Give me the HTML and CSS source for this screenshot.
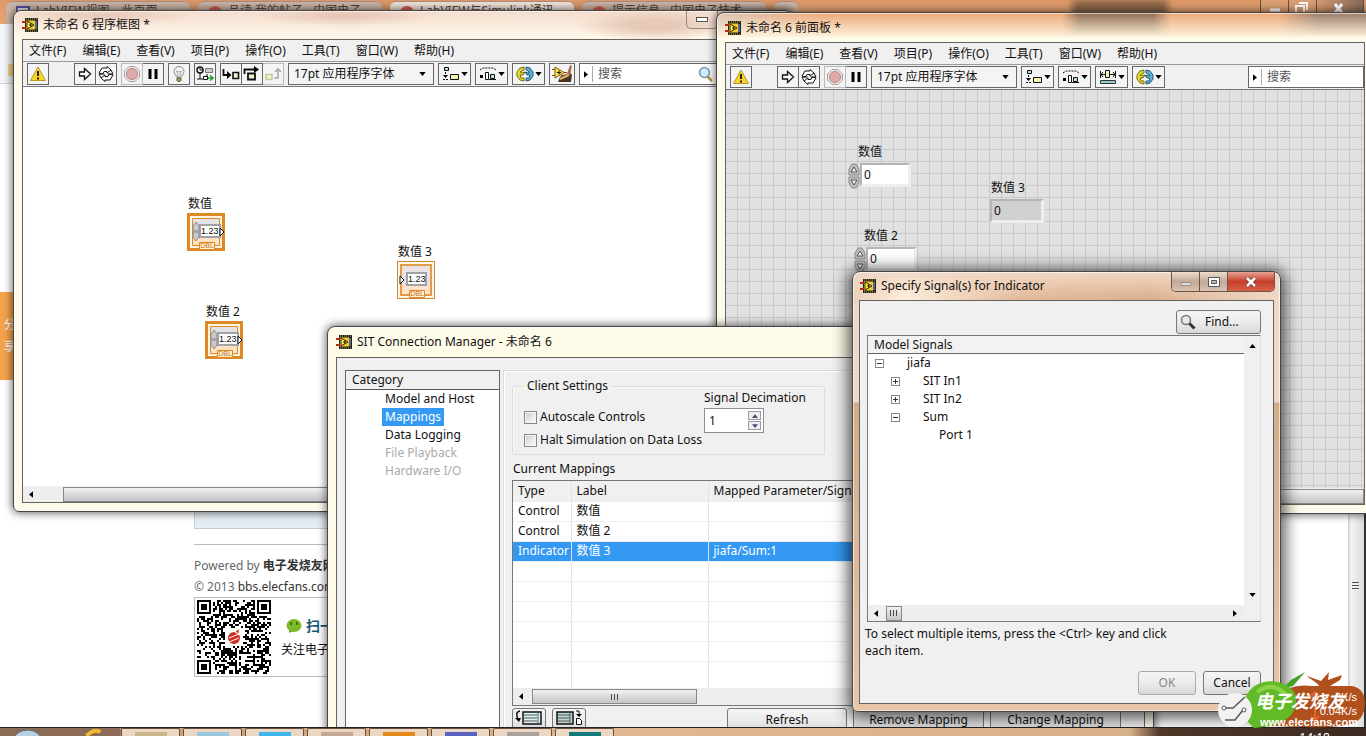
FILE: index.html
```html
<!DOCTYPE html>
<html lang="zh-CN">
<head>
<meta charset="utf-8">
<meta name="viewport" content="width=device-width, initial-scale=1">
<title>LabVIEW SIT Connection Manager</title>
<link rel="stylesheet" href="styles.css">
</head>
<body>
<svg class="defs" aria-hidden="true">
  <defs>
    <symbol id="i-app" viewBox="0 0 16 14"><path d="M3 0h13v14H3z" fill="#24221c"/><path d="M4 1h11M4 13h11" stroke="#b8a84c" stroke-dasharray="1 1"/><path d="M4 2.500h9v9H4z" fill="#f0cc30"/><path d="M13 3h2v8h-2z" fill="#536b93"/><path d="M0 4h4M0 10h4" stroke="#b82a18" stroke-width="2"/><path d="M5 3l7 4-7 4z" fill="#ffed4a" stroke="#302800"/><path d="M7 7h3M8.500 5.500v3" stroke="#302800"/></symbol>
    <symbol id="i-warn" viewBox="0 0 16 16"><path d="M8 1l7.500 13.500H.5z" fill="#f9d52c" stroke="#b99722"/><path d="M8 5v5M8 11.500v2" stroke="#222" stroke-width="2"/></symbol>
    <symbol id="i-run" viewBox="0 0 16 16"><path d="M2.500 6h5V2.500L13.500 8l-6 5.500V10h-5z" fill="#fff" stroke="#111" stroke-width="1.300"/></symbol>
    <symbol id="i-cont" viewBox="0 0 16 16"><path d="M1 7l3-5h5V.5L13 4 9 7V5.500H6L4.500 8z" fill="#fff" stroke="#111"/><path d="M15 9l-3 5H7v1.500L3 12l4-3v1.500h3L11.500 8z" fill="#fff" stroke="#111"/><path d="M9.500 8h5.500l-2-4M6.500 8H1l2 4" fill="none" stroke="#111"/></symbol>
    <symbol id="i-abort" viewBox="0 0 16 16"><path d="M5 .5h6L15.500 5v6L11 15.500H5L.5 11V5z" fill="#ece6e6" stroke="#aaa0a0"/><circle cx="8" cy="8" r="5.500" fill="#dfa9a9" stroke="#b18a8a"/></symbol>
    <symbol id="i-pause" viewBox="0 0 16 16"><path d="M3.500 3h3v10h-3zM9.500 3h3v10h-3z" fill="#000"/></symbol>
    <symbol id="i-bulb" viewBox="0 0 16 16"><path d="M5.500 11C5 8.500 3 8 3 5.500a5 5 0 0 1 10 0C13 8 11 8.500 10.500 11z" fill="#f4f4f4" stroke="#888"/><path d="M6 5l1 5M10 5l-1 5M5 5l3 1 3-1" stroke="#aaa" fill="none"/><path d="M6 12h4v2.500l-1 1H7l-1-1z" fill="#b79c4e" stroke="#555"/></symbol>
    <symbol id="i-retain" viewBox="0 0 18 16"><circle cx="4" cy="4" r="3" fill="#fff" stroke="#111" stroke-width="1.500"/><path d="M4 2v2h2M4 7v6M1 13h6M11 8v4" stroke="#111" fill="none"/><path d="M9.500 2.500h7v4h-7z" fill="#ccc" stroke="#777"/><path d="M7.500 10.500h4v3h-4z" fill="#fff" stroke="#111"/><path d="M12 12h5M14 9.500l3 2.500-3 2.500" stroke="#17a529" stroke-width="1.500" fill="none"/></symbol>
    <symbol id="i-into" viewBox="0 0 18 16"><path d="M1.500 3v6H6" stroke="#111" stroke-width="1.800" fill="none"/><path d="M5 5l4.500 4L5 13z"/><path d="M11 6.500h5.500v6H11z" fill="#f3f3d0" stroke="#111" stroke-width="1.600"/></symbol>
    <symbol id="i-over" viewBox="0 0 18 16"><path d="M1.500 8V3.500H12" stroke="#111" stroke-width="1.800" fill="none"/><path d="M11 0l5 3.500L11 7z"/><path d="M5 7.500h7v6H5z" fill="#f3f3d0" stroke="#111" stroke-width="1.800"/></symbol>
    <symbol id="i-out" viewBox="0 0 18 16"><path d="M2 8.500h6v5H2z" fill="#f3f3cc" stroke="#c6c69c" stroke-width="1.500"/><path d="M10 12h4V4M11 6l3-3 3 3" stroke="#aaa" stroke-width="1.700" fill="none"/></symbol>
    <symbol id="i-align" viewBox="0 0 18 16"><path d="M2.500 1.500h4v3h-4z" fill="#b6e0dd" stroke="#111"/><path d="M3.500 6v3M1 13.500h6" stroke="#111" stroke-dasharray="2 1"/><path d="M1 9h5l-2.500 3z"/><path d="M8.500 8.500h8v5h-8z" fill="#f5efab" stroke="#111"/></symbol>
    <symbol id="i-dist" viewBox="0 0 18 16"><path d="M1 4l3-2h10l3 2" stroke="#111" stroke-dasharray="2 1" fill="none"/><path d="M1 9h3v3H1z"/><path d="M6.500 6.500h3v7h-3z" fill="#fff" stroke="#111"/><path d="M11.500 8.500h4v4h-4z" fill="#b6e0dd" stroke="#111"/><path d="M10 13.500h7" stroke="#111"/></symbol>
    <symbol id="i-size" viewBox="0 0 18 16"><path d="M1 5.500h16M1.500 2v7M16.500 2v7M4 3L2 5.500 4 8M14 3l2 2.500L14 8" stroke="#111" fill="none"/><path d="M6.500 1.500h4v7h-4z" fill="#f5efab" stroke="#111"/><path d="M1.500 11.500h15v3h-15z" fill="#8ed0cf" stroke="#333"/></symbol>
    <symbol id="i-order" viewBox="0 0 18 16"><path d="M8 1L4 2 1 6v4l3 4 4 1v-3H5L4 9h3l2-3-3 1-2-1 4-2z" fill="#eadc28" stroke="#746a10"/><path d="M10 1l4 1 3 4v4l-3 4-4 1v-3h3l1-3h-3L9 6l3 1 2-1-4-2z" fill="#5ab3d6" stroke="#205b77"/></symbol>
    <symbol id="i-clean" viewBox="0 0 22 18"><path d="M20 1l-3 8-7 1-2 6 11 1z" fill="#7d5430"/><path d="M9 12l12-3-1 8H7z" fill="#4c3420"/><path d="M19 0l2 1-2 8h-3z" fill="#9b754b"/><path d="M1 4.500h3M1 10.500h3M12 7.500h4" stroke="#b22"/><path d="M4 2l9 5.500L4 13z" fill="#ffe743" stroke="#6f6210"/><path d="M6 7.500h4M8 5.500v4" stroke="#111"/><path d="M9 14l9-4" stroke="#ddb76a" stroke-width="2"/></symbol>
    <symbol id="i-search" viewBox="0 0 16 16"><path d="M9 9l5.500 5.500" stroke="#333" stroke-width="3"/><circle cx="6" cy="6" r="4.500" fill="#dfeaf1" stroke="#777" stroke-width="1.500"/></symbol>
    <symbol id="i-lens" viewBox="0 0 16 16"><path d="M9 10l5 5" stroke="#bf934c" stroke-width="2.500"/><circle cx="6.500" cy="6.500" r="5" fill="#c9edff" stroke="#8296aa" stroke-width="1.500"/></symbol>
    <symbol id="i-down" viewBox="0 0 8 5"><path d="M0 0h8L4 5z"/></symbol>
    <symbol id="i-left" viewBox="0 0 5 8"><path d="M5 0v8L0 4z"/></symbol>
    <symbol id="i-right" viewBox="0 0 5 8"><path d="M0 0v8l5-4z"/></symbol>
    <symbol id="i-up" viewBox="0 0 8 5"><path d="M0 5h8L4 0z"/></symbol>
    <symbol id="i-knob" viewBox="0 0 12 26"><path d="M1 12V6l3-5h4l3 5v6zM1 14v6l3 5h4l3-5v-6z" fill="#bdbdbd" stroke="#8a8a8a"/><path d="M3 9l3-5 3 5zM3 17h6l-3 5z" fill="#eee" stroke="#555"/></symbol>
    <symbol id="i-ctl" viewBox="0 0 38 38"><path d="M1.500 1.500h35v35h-35z" fill="#fff2de" stroke="#dc8a25" stroke-width="3"/><path d="M5.500 5.500h27v27h-27z" fill="#e3e3e6" stroke="#dc8a25"/><path d="M6 24h26v8H6z" fill="#ffe2bf"/><path d="M12 11h22v14H12z" fill="#a1a1a8"/><path d="M14 13h18v10H14z" fill="#fff"/><path d="M6 18V13l3-4 3 4v5zM6 19v5l3 4 3-4v-5z" fill="#c9c9cc" stroke="#8b8b92"/><path d="M33 15v8l4-4z" fill="#fff" stroke="#111"/><path d="M12.500 29.500h15v7h-15z" fill="#fff0d8" stroke="#dc8a25"/></symbol>
    <symbol id="i-ind" viewBox="0 0 38 38"><path d="M.5.5h37v37H.5z" fill="#fff8e9" stroke="#cc8734"/><path d="M4 4h30v30H4z" fill="#e8e4e6" stroke="#e29b48" stroke-width="2"/><path d="M5 25h28v8H5z" fill="#ffe2c8"/><path d="M9 11h21v14H9z" fill="#a1a1a8"/><path d="M11 13h17v10H11z" fill="#fff"/><path d="M3 15v8l4-4z" fill="#fff" stroke="#111"/><path d="M12.500 29.500h15v7h-15z" fill="#fff0d8" stroke="#dc8a25"/></symbol>
  </defs>
</svg>

<main class="desktop">
  <section class="browser" aria-label="浏览器">
    <div class="tabs">
      <span class="tab"><i class="fav fav-purple"></i>LabVIEW视图，此页面</span>
      <span class="tab"><i class="fav"></i>品读 我的帖子 - 中国电子</span>
      <span class="tab tab-on"><i class="fav"></i>LabVIEW与Simulink通讯</span>
      <span class="tab"><i class="fav"></i>提示信息 - 中国电子技术</span>
      <span class="tab tab-new"></span>
      <span class="shade"></span>
      <span class="sys"><svg viewBox="0 0 104 14"><path d="M.5 0v14M28.500 0v14M56.500 0v14M103.500 0v14" stroke="#69503e"/><path d="M10 10h10" stroke="#fff" stroke-width="3"/><path d="M36 6h8v7h-8zM39 3h8v7" stroke="#fff" stroke-width="2" fill="none"/><path d="M75 4l7 9M82 4l-7 9" stroke="#fff" stroke-width="3"/></svg></span>
    </div>
    <div class="bar"></div>
    <div class="page">
      <a class="share" href="#share">分<br>享</a>
      <footer class="foot">
        <div class="strip"></div>
        <p class="credit first">Powered by <b>电子发烧友网</b></p>
        <p class="credit">© 2013 <span>bbs.elecfans.com</span></p>
        <div class="qrbox">
          <svg class="qr" id="qr" viewBox="0 0 37 37" role="img" aria-label="二维码"></svg>
          <div class="follow">
            <p class="scan"><svg viewBox="0 0 16 16" class="s16"><path d="M3 11l0 4 4-2z" fill="#70a51e"/><ellipse cx="8" cy="7.500" rx="7.500" ry="6.500" fill="#7db928"/><path d="M5 4v3M11 4v3" stroke="#33590a" stroke-width="1.500"/></svg>扫一扫</p>
            <p>关注电子发烧友</p>
          </div>
        </div>
      </footer>
      <div class="pagebar"><i></i></div>
    </div>
  </section>

  <section class="win diagram" aria-label="程序框图">
    <header class="title"><svg class="app"><use href="#i-app"/></svg><h2>未命名 6 程序框图 *</h2><button class="minbtn" aria-label="最小化"><i></i></button></header>
    <div class="client">
      <nav class="menu"><button>文件(F)</button><button>编辑(E)</button><button>查看(V)</button><button>项目(P)</button><button>操作(O)</button><button>工具(T)</button><button>窗口(W)</button><button>帮助(H)</button></nav>
      <div class="tools">
        <button class="tb warn" aria-label="警告"><svg><use href="#i-warn"/></svg></button>
        <div class="grp"><button class="tb" aria-label="运行"><svg><use href="#i-run"/></svg></button><button class="tb" aria-label="连续运行"><svg><use href="#i-cont"/></svg></button></div>
        <div class="grp"><button class="tb dim" aria-label="中止"><svg><use href="#i-abort"/></svg></button><button class="tb" aria-label="暂停"><svg><use href="#i-pause"/></svg></button></div>
        <button class="tb" aria-label="高亮执行"><svg><use href="#i-bulb"/></svg></button>
        <button class="tb" aria-label="保存连线值"><svg><use href="#i-retain"/></svg></button>
        <div class="grp"><button class="tb" aria-label="步入"><svg><use href="#i-into"/></svg></button><button class="tb" aria-label="步过"><svg><use href="#i-over"/></svg></button><button class="tb dim" aria-label="步出"><svg><use href="#i-out"/></svg></button></div>
        <div class="fontsel"><select aria-label="字体"><option>17pt 应用程序字体</option></select><svg><use href="#i-down"/></svg></div>
        <button class="tb wide" aria-label="对齐"><svg><use href="#i-align"/></svg><svg class="dn"><use href="#i-down"/></svg></button>
        <button class="tb wide" aria-label="分布"><svg><use href="#i-dist"/></svg><svg class="dn"><use href="#i-down"/></svg></button>
        <button class="tb wide apart" aria-label="重新排序"><svg><use href="#i-order"/></svg><svg class="dn"><use href="#i-down"/></svg></button>
        <button class="tb clean" aria-label="整理"><svg><use href="#i-clean"/></svg></button>
        <label class="find"><svg class="rt"><use href="#i-right"/></svg><input type="text" placeholder="搜索" aria-label="搜索"><svg class="s16"><use href="#i-lens"/></svg></label>
      </div>
      <div class="canvas">
        <div class="node n1"><span>数值</span><div class="term"><svg><use href="#i-ctl"/></svg><b>1.23</b><em>DBL</em></div></div>
        <div class="node n2"><span>数值 2</span><div class="term"><svg><use href="#i-ctl"/></svg><b>1.23</b><em>DBL</em></div></div>
        <div class="node n3"><span>数值 3</span><div class="term ind"><svg><use href="#i-ind"/></svg><b>1.23</b><em>DBL</em></div></div>
      </div>
      <div class="hbar"><svg class="lt"><use href="#i-left"/></svg><i class="thumb"></i></div>
    </div>
  </section>

  <section class="win panel" aria-label="前面板">
    <header class="title"><svg class="app"><use href="#i-app"/></svg><h2>未命名 6 前面板 *</h2></header>
    <div class="client">
      <nav class="menu"><button>文件(F)</button><button>编辑(E)</button><button>查看(V)</button><button>项目(P)</button><button>操作(O)</button><button>工具(T)</button><button>窗口(W)</button><button>帮助(H)</button></nav>
      <div class="tools">
        <button class="tb warn" aria-label="警告"><svg><use href="#i-warn"/></svg></button>
        <div class="grp"><button class="tb" aria-label="运行"><svg><use href="#i-run"/></svg></button><button class="tb" aria-label="连续运行"><svg><use href="#i-cont"/></svg></button></div>
        <div class="grp"><button class="tb dim" aria-label="中止"><svg><use href="#i-abort"/></svg></button><button class="tb" aria-label="暂停"><svg><use href="#i-pause"/></svg></button></div>
        <div class="fontsel"><select aria-label="字体"><option>17pt 应用程序字体</option></select><svg><use href="#i-down"/></svg></div>
        <button class="tb wide" aria-label="对齐"><svg><use href="#i-align"/></svg><svg class="dn"><use href="#i-down"/></svg></button>
        <button class="tb wide" aria-label="分布"><svg><use href="#i-dist"/></svg><svg class="dn"><use href="#i-down"/></svg></button>
        <button class="tb wide" aria-label="调整大小"><svg><use href="#i-size"/></svg><svg class="dn"><use href="#i-down"/></svg></button>
        <button class="tb wide" aria-label="重新排序"><svg><use href="#i-order"/></svg><svg class="dn"><use href="#i-down"/></svg></button>
        <label class="find"><svg class="rt"><use href="#i-right"/></svg><input type="text" placeholder="搜索" aria-label="搜索"></label>
      </div>
      <div class="canvas grid">
        <div class="num c1"><label for="v1">数值</label><div class="numrow"><svg class="knob"><use href="#i-knob"/></svg><input id="v1" value="0"></div></div>
        <div class="num c2"><label for="v2">数值 2</label><div class="numrow"><svg class="knob"><use href="#i-knob"/></svg><input id="v2" value="0"></div></div>
        <div class="num c3"><label for="v3">数值 3</label><input id="v3" value="0" readonly></div>
      </div>
      <div class="hbar"><i class="thumb"></i></div>
    </div>
  </section>

  <section class="win sit" aria-label="SIT Connection Manager">
    <header class="title"><svg class="app"><use href="#i-app"/></svg><h2>SIT Connection Manager - 未命名 6</h2></header>
    <div class="client sitbody">
      <nav class="cats"><h3>Category</h3>
        <ul><li><a href="#host">Model and Host</a></li><li><a href="#map" class="on">Mappings</a></li><li><a href="#log">Data Logging</a></li><li><a class="off" href="#file">File Playback</a></li><li><a class="off" href="#io">Hardware I/O</a></li></ul>
      </nav>
      <div class="pane">
        <fieldset class="settings"><legend>Client Settings</legend>
          <div class="checks"><label><input type="checkbox">Autoscale Controls</label><label><input type="checkbox">Halt Simulation on Data Loss</label></div>
          <div class="deci"><label for="dec">Signal Decimation</label>
            <div class="spin"><input id="dec" value="1"><span><button aria-label="增加"><svg><use href="#i-up"/></svg></button><button aria-label="减少"><svg><use href="#i-down"/></svg></button></span></div></div>
        </fieldset>
        <h3 class="cap">Current Mappings</h3>
        <div class="maps">
          <table>
            <thead><tr><th class="w1">Type</th><th class="w2">Label</th><th>Mapped Parameter/Signal</th></tr></thead>
            <tbody>
              <tr><td>Control</td><td>数值</td><td></td></tr>
              <tr><td>Control</td><td>数值 2</td><td></td></tr>
              <tr class="sel"><td>Indicator</td><td>数值 3</td><td>jiafa/Sum:1</td></tr>
              <tr><td></td><td></td><td></td></tr><tr><td></td><td></td><td></td></tr><tr><td></td><td></td><td></td></tr><tr><td></td><td></td><td></td></tr><tr><td></td><td></td><td></td></tr><tr><td></td><td></td><td></td></tr>
            </tbody>
          </table>
          <div class="hbar"><svg class="lt"><use href="#i-left"/></svg><i class="thumb"><b class="grip"></b></i></div>
        </div>
        <div class="acts">
          <button class="btn ic" aria-label="导入"><svg viewBox="0 0 28 16"><path d="M5 1C1 2 1 5 3 9" stroke="#111" fill="none" stroke-width="1.500"/><path d="M0 8h6l-2 4z"/><path d="M8 2h18v12H8z" fill="#d9f3f4" stroke="#111" stroke-width="1.500"/><path d="M9 5h13M9 8h13M9 11h13M23 2v12" stroke="#555"/></svg></button>
          <button class="btn ic" aria-label="导出"><svg viewBox="0 0 28 16"><path d="M2 2h16v12H2z" fill="#b9d6d7" stroke="#111" stroke-width="1.500"/><path d="M3 5h12M3 8h12M3 11h12M15 2v12" stroke="#555"/><path d="M21 1h3v4" stroke="#111" fill="none"/><path d="M21 4h6l-3 3z"/><path d="M21.500 8.500h3l2 2v4h-5z" fill="#fff" stroke="#111"/></svg></button>
          <button class="btn b1">Refresh</button><button class="btn b2">Remove Mapping</button><button class="btn b2">Change Mapping</button>
        </div>
      </div>
    </div>
  </section>

  <section class="win dialog" role="dialog" aria-label="Specify Signal(s) for Indicator">
    <header class="title"><svg class="app"><use href="#i-app"/></svg><h2>Specify Signal(s) for Indicator</h2>
      <div class="wbtns"><button aria-label="最小化"><svg viewBox="0 0 14 12"><path d="M2 6.500h10v3H2z" fill="#ddd" stroke="#a08c80"/></svg></button><button aria-label="最大化"><svg viewBox="0 0 14 12"><path d="M1.500 1.500h11v9h-11z" fill="#fff" stroke="#555"/><path d="M4.500 4.500h5v3h-5z" fill="#bbb" stroke="#555"/></svg></button><button class="x" aria-label="关闭"><svg viewBox="0 0 14 12"><path d="M3 2l8 8M11 2l-8 8" stroke="#6b3a35" stroke-width="4"/><path d="M3 2l8 8M11 2l-8 8" stroke="#fff" stroke-width="2.500"/></svg></button></div>
    </header>
    <div class="client dlg">
      <button class="btn findbtn"><svg class="s16"><use href="#i-search"/></svg><span>Find...</span></button>
      <div class="tree">
        <div class="treemain">
          <h3>Model Signals</h3>
          <ul>
            <li><button class="ex" aria-label="折叠"></button><span>jiafa</span>
              <ul>
                <li><button class="ex plus" aria-label="展开"></button><span>SIT In1</span></li>
                <li><button class="ex plus" aria-label="展开"></button><span>SIT In2</span></li>
                <li><button class="ex" aria-label="折叠"></button><span>Sum</span><ul><li><span class="leaf">Port 1</span></li></ul></li>
              </ul>
            </li>
          </ul>
          <div class="hbar"><svg class="lt"><use href="#i-left"/></svg><i class="thumb"><b class="grip"></b></i><svg class="lt end"><use href="#i-right"/></svg></div>
        </div>
        <div class="vbar"><svg><use href="#i-up"/></svg><svg><use href="#i-down"/></svg></div>
      </div>
      <p class="hint">To select multiple items, press the &lt;Ctrl&gt; key and click each item.</p>
      <div class="oks"><button class="btn" disabled>OK</button><button class="btn">Cancel</button></div>
    </div>
  </section>

  <footer class="taskbar"><i class="t dark"><svg viewBox="0 0 120 8"><ellipse cx="28" cy="12" rx="14" ry="10" fill="#b9d0e2" stroke="#567"/><path d="M88 8q8-8 14-4" stroke="#f0b92f" stroke-width="4" fill="none"/></svg></i><i class="t"><b class="k1"></b></i><i class="t"><b class="k2"></b></i><i class="t"><b class="k3"></b></i><i class="t"><b class="k4"></b></i><i class="t"><b class="k5"></b></i><i class="t"><b class="k6"></b></i><i class="t"><b class="k7"></b></i><i class="t"><b class="k8"></b></i><time>14:18</time></footer>

  <aside class="mark" aria-label="电子发烧友">
    <svg viewBox="0 0 149 58"><path d="M36 18C44 10 60 14 66 18c8-2 16-6 28-4h8c-2-4-8-6-12-10l14 5L112 0l-1 8 14-5-2 5-10 6h20c10 0 15 8 15 16 0 14-6 20-14 22-24 6-60 2-80 2z" fill="#b0501d"/><path d="M66 16L74 8l14-8-12 14z" fill="#48a023"/><path d="M28 26C38 2 72 6 79 24c2 18-10 30-42 32-10-8-12-20-9-30z" fill="#62bb26"/><path d="M40 20q16-12 30 4" stroke="#a8e35c" stroke-width="4" fill="none" opacity=".6"/><circle cx="18" cy="38" r="17" fill="#f2f2f2"/><path d="M8 36l8 0 12-11M8 48l10 0 8-10" stroke="#555" stroke-width="1.500" fill="none"/><circle cx="7" cy="36" r="2" fill="#fff" stroke="#555"/><circle cx="27" cy="38" r="2" fill="#fff" stroke="#555"/><path d="M98 32V20M94 24l4-4 4 4M98 36v12M94 44l4 4 4-4" stroke="#e5652b" stroke-width="2" fill="none"/></svg>
    <span class="brand">电子发烧友</span><span class="up">0K/s</span><span class="down">0.04K/s</span><span class="url">www.elecfans.com</span>
  </aside>
</main>
<script src="app.js"></script>
</body>
</html>
```
FILE: styles.css
```css
*{box-sizing:border-box}
body{margin:0;font:12px/16px "Noto Sans","Noto Sans CJK SC",sans-serif;color:#111}
h2,h3,p,ul{margin:0;padding:0;font-weight:400;font-size:12px}
ul{list-style:none}
button,input,select{font:inherit;color:inherit;margin:0;padding:0;border:0;background:none;border-radius:0}
i,em{font-style:normal}
a{color:inherit;text-decoration:none}
.defs{position:absolute;width:0;height:0}
.desktop{position:relative;height:100vh;min-height:736px;overflow:hidden;background:#fff}
.s16{width:16px;height:16px;flex:none}

/* browser behind the windows */
.browser{height:100%;display:flex;flex-direction:column}
.tabs{display:flex;gap:8px;height:24px;padding:1px 2px 0 6px;background:linear-gradient(#dc9867,#e8a778);position:relative}
.tab{width:184px;padding:1px 10px 0;background:#cdb7a9;border-radius:6px 6px 0 0;color:#4c423c;white-space:nowrap;overflow:hidden;display:flex;gap:6px;border-top:1px solid #a98e7c}
.tab-on{background:#f3e6dc}
.tab-new{width:24px}
.fav{width:14px;height:14px;margin-top:3px;background:#d8604f;border-radius:50%;flex:none}
.fav-purple{background:#eee;border:2px solid #5a4fa8;border-radius:0}
.shade{width:96px;margin:-1px 0 0 auto;background:#8b6448;filter:blur(3px)}
.sys{width:104px;margin:-1px 0 0 84px;background:linear-gradient(90deg,#d99e72 50%,#84695a)}
.sys svg{display:block;width:104px;height:14px}
.bar{height:60px;background:linear-gradient(90deg,#f1f4f8 8px,#f4d488 8px,#f4d488 14px,#f1f4f8 14px) 0 40px/100% 12px no-repeat #f1f4f8;border-bottom:1px solid #d5d5d5}
.page{flex:1;position:relative;display:flex;flex-direction:column;justify-content:flex-end}
.share{position:absolute;left:0;top:208px;width:20px;height:88px;padding:22px 0 0 4px;background:#f5a34b;color:#fff;line-height:22px}
.foot{padding:0 0 59px 194px;width:600px}
.strip{height:40px;background:#e5edf3;border:1px solid #c3cdd6}
.credit{height:21px;line-height:21px;color:#666;white-space:nowrap}
.credit.first{margin-top:15px;border-top:1px solid #bbb;padding-top:10px;height:32px}
.credit b,.credit span{color:#333}
.qrbox{display:flex;gap:10px;height:80px;border:1px solid #bbb;padding:2px}
.qr{width:74px;height:74px;flex:none}
.follow{padding-top:18px;white-space:nowrap;display:flex;flex-direction:column;gap:8px}
.scan{display:flex;gap:4px;padding-left:5px;font-weight:700;font-size:14px;color:#185574}
.pagebar{position:absolute;right:0;top:0;bottom:8px;width:18px;background:linear-gradient(90deg,#ccc,#f3f3f3 3px,#ddd);border-right:2px solid #333}
.pagebar i{position:absolute;right:5px;bottom:138px;width:7px;height:8px;background:repeating-linear-gradient(#555 0 1px,#eee 1px 3px)}

/* window frames */
.win{position:absolute;display:flex;flex-direction:column;border:1px solid #4a4540;border-radius:8px 8px 6px 6px;background:#fffbe9;box-shadow:0 0 9px 1px #0009,inset 0 0 0 1px #fff9}
.title{display:flex;align-items:center;gap:5px;height:28px;flex:none;padding-left:8px;border-radius:7px 7px 0 0;position:relative}
.title h2{white-space:nowrap}
.app{width:16px;height:14px}
.client{flex:1;min-height:0;display:flex;flex-direction:column;margin:0 8px 8px;border:1px solid #66625e;background:#f0f0f0;overflow:hidden}
.diagram{left:13px;top:10px;width:780px;height:502px;background:radial-gradient(ellipse 80px 16px at 640px 14px,#e7c9b8 30%,transparent),radial-gradient(ellipse 90px 10px at 330px 5px,#e5c3b3,transparent),radial-gradient(ellipse 90px 10px at 90px 5px,#e6c8b9,transparent),linear-gradient(#f4dccd,#fff7e8 26px,#fffbea 40px)}
.minbtn{position:absolute;left:672px;top:0;width:32px;height:18px;border:1px solid #9a857b;border-top:0;border-radius:0 0 5px 5px;display:grid;place-items:center}
.minbtn i{width:12px;height:5px;border:1px solid #555;background:#fff}
.panel{left:716px;top:12px;right:-8px;height:502px;background:linear-gradient(transparent,#fff3dc 24px) 0 0/100% 24px no-repeat,linear-gradient(90deg,#d9c3b3,#eda878 100px,#eda878 345px,#8e6a50 362px,#8e6a50 436px,#eda878 454px,#eda878 560px,#9a7d69 600px) 0 0/100% 24px no-repeat,#fffbea}
.panel .title{height:29px}
.menu{display:flex;gap:16px;height:22px;padding-left:6px;border-bottom:1px solid #999;flex:none}
.menu button{line-height:20px;white-space:nowrap}
.tools{display:flex;gap:4px;height:25px;padding:1px 0 0 4px;border-bottom:1px solid #777;flex:none}
.grp{display:flex}
.grp .tb+.tb{border-left:0;width:21px}
.tb{width:22px;height:22px;border:1px solid #666;background:#f4f4f4;display:flex;align-items:center;justify-content:center;gap:1px;flex:none}
.tb svg{width:18px;height:16px}
.tb.dim{border-color:#bbb}
.tb.warn{margin-right:21px}
.tb.wide{width:33px}
.tb.clean{width:26px}
.tb.clean svg{width:22px;height:18px}
.tb svg.dn{width:7px;height:4px}
.fontsel{display:grid;width:146px;height:22px;border:1px solid #666;background:#f4f4f4;flex:none}
.fontsel select,.fontsel svg{grid-area:1/1}
.fontsel select{appearance:none;padding-left:5px}
.fontsel svg{width:7px;height:4px;justify-self:end;align-self:center;margin-right:7px}
.find{display:flex;align-items:center;gap:4px;height:22px;border:1px solid #666;background:#fff;padding-left:4px;width:150px;flex:none}
.find input{width:102px;border-left:1px solid #aaa;padding-left:5px;outline:0}
.find input::placeholder{color:#555;opacity:1}
.rt{width:4px;height:7px}
.panel .find{margin-left:auto;width:116px}
.canvas{flex:1;position:relative;background:#fff;min-height:0}
.grid{background:repeating-linear-gradient(90deg,transparent 0 11px,#c9c9c9 11px 12px),repeating-linear-gradient(transparent 0 11px,#c9c9c9 11px 12px),#e1e1e1}
.node{position:absolute;display:flex;flex-direction:column;gap:1px;white-space:nowrap}
.node span{padding-left:1px}
.n1{left:164px;top:109px}.n2{left:182px;top:217px}.n3{left:374px;top:157px}
.term{position:relative;width:38px;height:38px}
.term svg{width:38px;height:38px;display:block}
.term b,.term em{position:absolute;font-family:"Liberation Sans",sans-serif}
.term b{left:14px;top:13px;font-size:9px;line-height:11px;font-weight:400}
.term.ind b{left:11px}
.term em{left:12px;top:29px;width:16px;text-align:center;font-size:7px;line-height:8px;color:#c96d08}
.num{position:absolute;display:flex;flex-direction:column;gap:3px}
.num label{padding-left:10px;line-height:16px}
.numrow{display:flex}
.knob{width:12px;height:26px}
.num input{width:51px;height:24px;border:2px solid #b5b5b5;border-right:3px solid #eee;border-bottom:3px solid #eee;padding-left:2px;background:#fff}
.num input[readonly]{width:54px;background:#d0d0d0}
.c1{left:122px;top:54px}.c2{left:128px;top:138px}.c3{left:264px;top:90px}
.c3 label{padding-left:1px}
.hbar{display:flex;align-items:center;height:16px;background:#eee;flex:none}
.hbar .lt{width:4px;height:7px;margin:0 7px 0 6px}
.thumb{height:15px;border:1px solid #888;background:linear-gradient(#f2f2f2,#ddd 45%,#c4c4c8);display:grid;place-items:center}
.diagram .thumb{flex:1;margin-left:23px}
.panel .thumb{width:100%}
.grip{width:8px;height:6px;background:repeating-linear-gradient(90deg,#444 0 1px,transparent 1px 3px)}

/* connection manager */
.sit{left:327px;top:326px;width:827px;bottom:0;border-radius:8px 8px 0 0}
.sit .title{height:30px}
.sitbody{flex-direction:row;padding:12px 0 0 8px;gap:3px;margin-bottom:0}
.cats{width:155px;border:1px solid #666;border-bottom:0;background:#fff;flex:none}
.cats h3{background:#f0f0f0;border-bottom:1px solid #555;line-height:18px;height:19px;padding-left:6px}
.cats li{height:18px;padding-left:36px}
.cats a{display:inline-block;padding:0 3px;line-height:18px}
.cats .on{background:#3399f3;color:#fff}
.cats .off{color:#aaa}
.pane{flex:1;min-width:0;border:1px solid #ddd;border-right:0;box-shadow:inset 1px 1px #fff;padding:7px 8px 0;display:flex;flex-direction:column}
.settings{margin:0;width:312px;height:77px;border:1px solid #dcdcdc;border-radius:2px;padding:0 14px 0 11px;display:flex;justify-content:space-between;box-shadow:inset 1px 1px #fafafa}
.settings legend{padding:0 3px;line-height:16px}
.checks{display:flex;flex-direction:column;gap:7px;padding-top:15px;width:190px;white-space:nowrap;margin-right:-10px;flex:none}
.checks label{display:flex;align-items:center;gap:3px}
.checks input{appearance:none;width:13px;height:13px;border:1px solid #888;background:linear-gradient(135deg,#ccc,#fff);box-shadow:inset 0 0 0 1px #f5f5f5}
.deci{margin-top:-4px;width:106px;white-space:nowrap}
.spin{display:flex;width:60px;height:25px;margin-top:2px;border:1px solid #8e8e98;background:#fff;padding:2px;justify-content:space-between}
.spin input{width:38px;padding-left:2px}
.spin span{display:flex;flex-direction:column;gap:1px}
.spin button{width:13px;height:9px;border:1px solid #9a9aa8;background:#eee;display:grid;place-items:center}
.spin svg{width:6px;height:4px;fill:#444a6a}
.cap{margin:6px 0 3px 1px}
.maps{border:1px solid #777;background:#fff;margin-right:18px}
table{width:100%;border-collapse:collapse;table-layout:fixed}
th,td{height:20px;padding:0 0 0 5px;text-align:left;font-weight:400;border-right:1px solid #e3e3e3;border-bottom:1px solid #eee;line-height:18px;white-space:nowrap;overflow:hidden}
th{background:#f0f0f0}
tr:last-child td{height:27px}
.w1{width:58px}.w2{width:137px}
.sel td{background:#3399f3;color:#fff}
.maps .thumb{width:165px;margin-left:2px}
.acts{display:flex;gap:6px;padding-top:2px}
.btn{border:1px solid #777;border-radius:3px;background:linear-gradient(#f5f5f5,#ebebeb 50%,#d8d8da);height:24px}
.ic{width:34px;padding-top:1px;flex:none}
.ic svg{width:28px;height:16px}
.b1{width:120px;margin-left:135px}
.b2{width:131px}

/* signal dialog */
.dialog{left:852px;top:271px;width:429px;height:441px;background:linear-gradient(#f1d8c5,transparent 30px),linear-gradient(90deg,#e9cdb6,#fff1de 12%,#dfb594 40%,#d8ab87 70%,#efd9c8) 0 0/100% 30px no-repeat,linear-gradient(#eed9c9 0 130px,#d5ac8a 131px,#e8c6a7);box-shadow:0 2px 16px 4px #000a,inset 0 0 0 1px #fff9}
.dialog .title{padding-left:7px}
.dialog .client{margin:0 6px 7px}
.wbtns{display:flex;position:absolute;right:5px;top:0;height:20px;border:1px solid #6b5448;border-top:0;border-radius:0 0 5px 5px;overflow:hidden}
.wbtns button{width:28px;background:linear-gradient(#eddccf,#c4aa98 50%,#d9c2b0);border-right:1px solid #6b5448}
.wbtns .x{width:46px;border:0;background:linear-gradient(#eaa393,#c43e2a 50%,#d8614a)}
.wbtns svg{width:14px;height:12px;display:block;margin:auto}
.dlg{padding:9px 12px 8px 7px}
.findbtn{display:flex;align-items:center;gap:9px;width:85px;align-self:flex-end;padding-left:3px;flex:none}
.tree{display:flex;flex:1;border:1px solid #777;border-right-color:#ddd;background:#fff;margin-top:1px;min-height:0}
.treemain{flex:1;display:flex;flex-direction:column}
.tree h3{height:18px;line-height:18px;padding-left:6px;background:#f2f2f2;border-bottom:1px solid #666}
.treemain>ul{flex:1;padding-left:7px}
.tree li ul{padding-left:16px}
.tree li{line-height:18px}
.ex{width:9px;height:9px;border:1px solid #888;background:linear-gradient(#333,#333) center/5px 1px no-repeat;margin-right:23px}
.plus{background:linear-gradient(#333,#333) center/5px 1px no-repeat,linear-gradient(#333,#333) center/1px 5px no-repeat}
.leaf{padding-left:32px}
.vbar{width:16px;background:#f0f0f0;display:flex;flex-direction:column;justify-content:space-between;align-items:center;padding:8px 0 24px}
.vbar svg{width:7px;height:4px}
.tree .thumb{width:16px;margin-left:1px}
.hbar .lt.end{margin-left:auto}
.hint{line-height:17px;width:326px;margin:3px 0 12px -2px;flex:none}
.oks{display:flex;gap:7px;justify-content:flex-end;flex:none}
.oks .btn{width:58px}
.oks .btn:disabled{color:#888;border-color:#aaa}

.taskbar{position:absolute;left:0;right:0;bottom:0;height:9px;border-top:1px solid #222;background:linear-gradient(90deg,#8b6b55 120px,#c79c77 121px,#e0b88f 620px,#d7b08a 1130px,#4e3628 1160px,#3b2a22);display:flex;gap:3px;overflow:hidden}
.t{width:59px;background:#ecd6c4;border:1px solid #6a4e3c;border-bottom:0;border-radius:2px 2px 0 0;display:block}
.t.dark{width:118px;background:none;border:0}
.t b{display:block;width:32px;height:5px;margin:3px auto 0}
.t svg{display:block;width:118px;height:8px}
.k1{background:#c9b48c}.k2{background:#9cc5de}.k3{background:#3fb4ea}.k4{background:#c6a993}
.k5{background:#e48a1c}.k6{background:#5b62c4}.k7{background:#a9a39c}.k8{background:#127a78}
.taskbar time{margin:4px 36px 0 auto;color:#fff;line-height:12px}
.mark{position:absolute;right:0;bottom:6px;width:149px;height:58px;color:#fff;font-family:"Liberation Sans","Noto Sans CJK SC",sans-serif;white-space:nowrap}
.mark svg{width:149px;height:58px;display:block}
.mark span{position:absolute}
.brand{left:38px;top:20px;font-weight:700;font-style:italic;font-size:18px;line-height:20px}
.mark .up{right:9px;top:19px;font-size:11px;line-height:12px}
.mark .down{right:9px;top:33px;font-size:11px;line-height:12px}
.mark .url{right:8px;top:44px;font-size:11px;line-height:12px;font-weight:700}
```
FILE: app.js
```js
// Draws the 37-module code: three finder squares, one alignment square, data modules.
(function () {
  var n = 37, seed = 71, d = "";
  function rnd() { seed = (seed * 1103515245 + 12345) % 2147483648; return seed / 2147483648; }
  function ring(x, y, ox, oy, s) {
    var dx = x - ox, dy = y - oy;
    if (dx < 0 || dy < 0 || dx >= s || dy >= s) return null;
    var m = Math.min(dx, dy, s - 1 - dx, s - 1 - dy);
    return m !== 1;
  }
  for (var y = 0; y < n; y++) for (var x = 0; x < n; x++) {
    var on = rnd() > 0.5, r;
    if ((x < 8 && y < 8) || (x > 28 && y < 8) || (x < 8 && y > 28)) on = false;
    [[0, 0, 7], [30, 0, 7], [0, 30, 7], [28, 28, 5]].forEach(function (f) {
      r = ring(x, y, f[0], f[1], f[2]); if (r !== null) on = r;
    });
    if (x > 13 && x < 23 && y > 13 && y < 23) on = false;
    if (on) d += "M" + x + " " + y + "h1v1h-1z";
  }
  document.getElementById("qr").innerHTML = '<path shape-rendering="crispEdges" d="' + d + '"/><circle cx="18.500" cy="19" r="3" fill="#d0301f"/><path d="M19 16l2-2v3zM16 19l5-2M16 21l5-2" stroke="#fff" stroke-width=".5" fill="#d0301f"/>';
})();
```
